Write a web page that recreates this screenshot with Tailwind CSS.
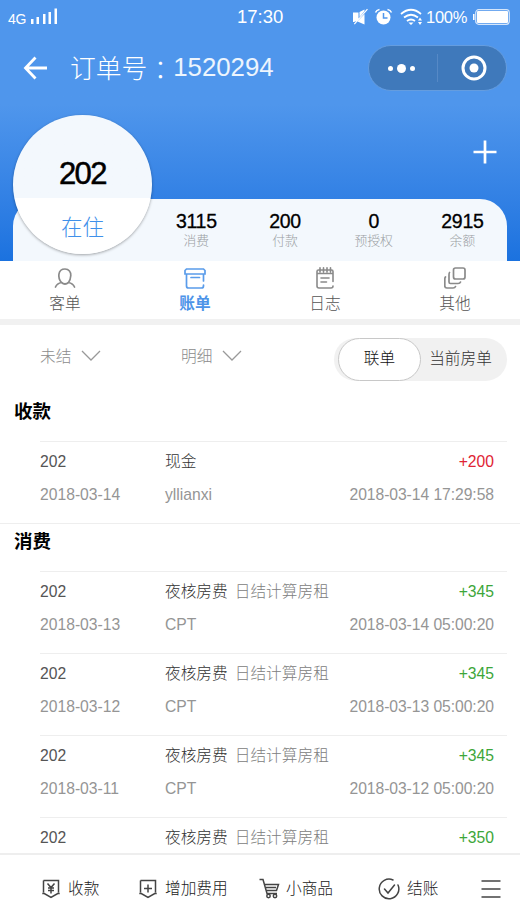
<!DOCTYPE html>
<html lang="zh-CN">
<head>
<meta charset="utf-8">
<title>订单号：1520294</title>
<script src="https://cdn.jsdelivr.net/npm/@tailwindcss/browser@4"></script>
</head>
<body class="bg-white">
<div class="relative flex h-[924px] w-[520px] flex-col overflow-hidden bg-white font-['Liberation_Sans','Noto_Sans_CJK_SC',sans-serif] font-light">

  <header class="relative flex h-[261px] shrink-0 flex-col bg-linear-to-b from-[#4f96ec] from-40% to-[#1b72df] text-white">
    <!-- status bar -->
    <div class="relative flex h-[34px] items-center pl-[8px] pr-[10px]">
      <span class="mt-[3px] text-[14px] leading-[20px] tracking-[-0.3px]">4G</span>
      <svg class="ml-[4px] -mt-[2px]" width="28" height="18" viewBox="0 0 28 18" fill="#fff"><path d="M1 12h2.500v5H1zM6.500 10H9v7H6.500zM13 7h2.500v10H13zM18.500 5H21v12h-2.500zM24.500 1.500H27V17h-2.500z"/></svg>
      <span class="absolute left-[237px] top-[7px] text-[18.500px] leading-[20px]">17:30</span>
      <div class="ml-auto flex items-center">
        <svg width="17" height="18" viewBox="0 0 17 18" fill="#fff"><path d="M1 4.500h5.500V12L2 14H1zM7.500 4L12.500 1.500V3L7.500 9zM5.500 13.500L12.500 6v10.500zM15 .8l.9.8L2.800 16.500l-.9-.8z"/></svg>
        <svg class="ml-[5px]" width="19" height="18" viewBox="0 0 19 18"><circle cx="9.500" cy="9.500" r="7" fill="#fff"/><path d="M9.500 5v5h4" fill="none" stroke="#4f96ec" stroke-width="1.500"/><path d="M1.500 4.500q1-2.500 4-3M17.500 4.500q-1-2.500-4-3" fill="none" stroke="#fff" stroke-width="1.500"/></svg>
        <svg class="ml-[7px]" width="23" height="18" viewBox="0 0 23 18" fill="none" stroke="#fff" stroke-width="1.800"><path d="M1 6q10-8.500 20 0M4 9.500q7-5.500 14 0M7 13q4-3 8 0"/><path d="M8.500 14.500h5L11 17zM18 12.500l2-3 2 3zM18 14l2 3 2-3z" fill="#fff" stroke="none"/></svg>
        <span class="ml-[3px] w-[43px] whitespace-nowrap text-[16.500px] leading-[20px] tracking-[-0.300px]">100%</span>
        <svg class="ml-[3px]" width="38" height="16" viewBox="0 0 38 16"><rect x="3.700" y=".7" width="33.600" height="14.600" rx="3" fill="none" stroke="#d5e6fb" stroke-width="1.200"/><path d="M2.500 5v6H1V5z" fill="#fff"/><rect x="5" y="2" width="31" height="12" rx="1" fill="#fff"/></svg>
      </div>
    </div>
    <!-- title bar -->
    <div class="flex h-[68px] items-center pl-[23px] pr-[13px]">
      <svg width="25" height="24" viewBox="0 0 25 24" fill="none" stroke="#fff" stroke-width="2.800"><path d="M12.500 1.500L2.500 12l10 10.500M2.500 12H24"/></svg>
      <h1 class="ml-[22px] flex text-[25.800px] leading-[34px] font-light"><span class="font-['Noto_Sans_CJK_SC']">订单号</span><span lang="zh-TW" class="pt-[2px] font-['Noto_Sans_CJK_TC']">：</span><span class="text-white/90">1520294</span></h1>
      <div class="ml-auto flex h-[46px] w-[139px] items-center rounded-full border border-[#659ddf] bg-[#3f79bb]">
        <div class="flex w-[65px] items-center justify-center gap-[4px]"><i class="size-[5px] rounded-full bg-white"></i><i class="size-[9px] rounded-full bg-white"></i><i class="size-[5px] rounded-full bg-white"></i></div>
        <div class="ml-[3px] h-[28px] w-px bg-[#5689c6]"></div>
        <div class="flex flex-1 justify-center pl-[3px]"><svg width="26" height="26" viewBox="0 0 26 26"><circle cx="13" cy="13" r="11" fill="none" stroke="#fff" stroke-width="3"/><circle cx="13" cy="13" r="4.500" fill="#fff"/></svg></div>
      </div>
    </div>
    <div class="flex h-[97px] items-center justify-end pr-[23px]"><svg class="mt-[3px]" width="24" height="24" viewBox="0 0 24 24" stroke="#fff" stroke-width="2.700"><path d="M12 .5v23M.5 12h23"/></svg></div>
    <!-- totals -->
    <div class="mx-[13px] flex h-[62px] rounded-t-[27px] bg-[#f3f8fd] pl-[139px] pt-[12px] text-center text-[#9a9ea3]">
      <div class="w-[88.700px]"><b class="block text-[19.500px] font-normal leading-[21px] tracking-[-0.300px] text-black [-webkit-text-stroke:0.300px_black]">3115</b><span class="mt-px block text-[12.800px] leading-[15px]">消费</span></div>
      <div class="w-[88.700px]"><b class="block text-[19.500px] font-normal leading-[21px] tracking-[-0.300px] text-black [-webkit-text-stroke:0.300px_black]">200</b><span class="mt-px block text-[12.800px] leading-[15px]">付款</span></div>
      <div class="w-[88.700px]"><b class="block text-[19.500px] font-normal leading-[21px] tracking-[-0.300px] text-black [-webkit-text-stroke:0.300px_black]">0</b><span class="mt-px block text-[12.800px] leading-[15px]">预授权</span></div>
      <div class="w-[88.700px]"><b class="block text-[19.500px] font-normal leading-[21px] tracking-[-0.300px] text-black [-webkit-text-stroke:0.300px_black]">2915</b><span class="mt-px block text-[12.800px] leading-[15px]">余额</span></div>
    </div>
    <!-- room badge -->
    <div class="absolute left-[13px] top-[115px] flex size-[139px] flex-col items-center rounded-full bg-linear-to-b from-[#f3f8fd] from-60% to-white to-60% pt-[41px] shadow-[0_1px_3px_rgba(0,0,0,0.35)]">
      <div class="text-[31px] leading-[36px] tracking-[-1.500px] text-black [-webkit-text-stroke:0.500px_black]">202</div>
      <div class="mt-[20px] text-[21.500px] leading-[32px] text-[#3f90ea]">在住</div>
    </div>
  </header>

  <!-- tabs -->
  <nav class="grid h-[58px] shrink-0 grid-cols-4 text-center text-[15.700px] leading-[20px] text-[#555]">
    <div class="flex flex-col items-center pt-[6px]">
      <svg width="22" height="22" viewBox="0 0 22 22" fill="none" stroke="#8a8a8a" stroke-width="1.700" stroke-linecap="round"><path d="M14.500 15.500Q11 18.500 7.500 15.500C3.500 11 3.500 2 11 2c4 0 6 3 5.800 6.500Q16.500 13 14.500 15.500M7.500 15.500Q3 16.500 1.500 20M14.500 15.500Q19 16.500 20.500 20"/></svg>
      <span class="mt-[5px]">客单</span></div>
    <div class="flex flex-col items-center pt-[6px] font-bold text-[#4d94e8]">
      <svg width="22" height="22" viewBox="0 0 22 22" fill="none" stroke="#5a9cea" stroke-width="1.700" stroke-linecap="round"><path d="M2.500 2h17l1.500 1.500V7H1V3.500zM2.500 7v12q0 2 2 2h13q2 0 2-2v-1M19.500 14V7M7 10.500h8.500"/></svg>
      <span class="mt-[5px]">账单</span></div>
    <div class="flex flex-col items-center pt-[6px]">
      <svg width="22" height="22" viewBox="0 0 22 22" fill="none" stroke="#8a8a8a" stroke-width="1.600" stroke-linecap="round"><path d="M19 14.500V4.500q0-1.500-1.500-1.500h-13Q3 3 3 4.500V19q0 2 2 2h12q2 0 2-2M3.500 6.500h15M6 .8V5M9.500.8V5M13 .8V5M16.500.8V5M7 11h8M7 15h5.500"/></svg>
      <span class="mt-[5px]">日志</span></div>
    <div class="flex flex-col items-center pt-[6px]">
      <svg width="22" height="22" viewBox="0 0 22 22" fill="none" stroke="#8a8a8a" stroke-width="1.700" stroke-linecap="round"><rect x="9.500" y="1" width="11.500" height="11" rx="2"/><path d="M5.500 5.500Q5 6 5 8v7q0 1.500 1.500 1.500H14q2 0 2.500-1.500M1.500 10Q.8 10.500.8 12.500V19q0 2 2 2H9q2 0 2.500-1.500"/></svg>
      <span class="mt-[5px]">其他</span></div>
  </nav>
  <div class="h-[6px] shrink-0 bg-[#f1f1f1]"></div>

  <!-- filters -->
  <div class="flex h-[66px] shrink-0 items-center pl-[40px] pr-[13px] pt-[3px] text-[15.700px] leading-[22px] text-[#8c8c8c]">
    <div class="flex w-[141px] items-center gap-[10px] pb-[5px]">未结<svg class="-mt-[2px]" width="20" height="12" viewBox="0 0 20 12" fill="none" stroke="#999" stroke-width="1.300"><path d="M1 1l9 9L19 1"/></svg></div>
    <div class="flex items-center gap-[10px] pb-[5px]">明细<svg class="-mt-[2px]" width="20" height="12" viewBox="0 0 20 12" fill="none" stroke="#999" stroke-width="1.300"><path d="M1 1l9 9L19 1"/></svg></div>
    <div class="ml-auto flex h-[43px] w-[173px] items-center rounded-full bg-[#f1f1f1] pl-[4px]">
      <div class="flex h-[43px] w-[83px] items-center justify-center rounded-full border-[1.5px] border-[#c8c8c8] bg-white pb-[2px] text-[#111]">联单</div>
      <div class="flex-1 pb-[2px] pr-[7px] text-center text-[#333]">当前房单</div>
    </div>
  </div>

  <!-- ledger -->
  <main class="flex h-[462px] shrink-0 flex-col overflow-hidden text-[15.700px] leading-[20px] text-[#959595]">
    <h2 class="h-[49.500px] shrink-0 pl-[14px] pt-[10px] text-[18.500px] font-bold leading-[22px] text-black">收款</h2>
    <section class="ml-[40px] mr-[13px] grid h-[82px] shrink-0 grid-cols-[125px_1fr_auto] grid-rows-[20px_20px] content-start gap-y-[13px] border-t border-[#eee] pr-[13px] pt-[10px]">
      <span class="text-[#555]">202</span><span class="text-[#333]">现金</span><span class="text-right text-[#e02434]">+200</span>
      <span>2018-03-14</span><span>yllianxi</span><span class="text-right tracking-[-0.060px]">2018-03-14 17:29:58</span>
    </section>
    <h2 class="h-[48px] shrink-0 border-t border-[#eee] pl-[14px] pt-[7px] text-[18.500px] font-bold leading-[22px] text-black">消费</h2>
    <section class="ml-[40px] mr-[13px] grid h-[82.300px] shrink-0 grid-cols-[125px_1fr_auto] grid-rows-[20px_20px] content-start gap-y-[13px] border-t border-[#eee] pr-[13px] pt-[10px]">
      <span class="text-[#555]">202</span><span><span class="mr-[7px] text-[#333]">夜核房费</span><span class="text-[#808080]">日结计算房租</span></span><span class="text-right text-[#3da639]">+345</span>
      <span>2018-03-13</span><span>CPT</span><span class="text-right tracking-[-0.060px]">2018-03-14 05:00:20</span>
    </section>
    <section class="ml-[40px] mr-[13px] grid h-[82.300px] shrink-0 grid-cols-[125px_1fr_auto] grid-rows-[20px_20px] content-start gap-y-[13px] border-t border-[#eee] pr-[13px] pt-[10px]">
      <span class="text-[#555]">202</span><span><span class="mr-[7px] text-[#333]">夜核房费</span><span class="text-[#808080]">日结计算房租</span></span><span class="text-right text-[#3da639]">+345</span>
      <span>2018-03-12</span><span>CPT</span><span class="text-right tracking-[-0.060px]">2018-03-13 05:00:20</span>
    </section>
    <section class="ml-[40px] mr-[13px] grid h-[82.300px] shrink-0 grid-cols-[125px_1fr_auto] grid-rows-[20px_20px] content-start gap-y-[13px] border-t border-[#eee] pr-[13px] pt-[10px]">
      <span class="text-[#555]">202</span><span><span class="mr-[7px] text-[#333]">夜核房费</span><span class="text-[#808080]">日结计算房租</span></span><span class="text-right text-[#3da639]">+345</span>
      <span>2018-03-11</span><span>CPT</span><span class="text-right tracking-[-0.060px]">2018-03-12 05:00:20</span>
    </section>
    <section class="ml-[40px] mr-[13px] flex h-[36px] shrink-0 border-t border-[#eee] pr-[13px] pt-[10px]">
      <span class="w-[125px] text-[#555]">202</span><span><span class="mr-[7px] text-[#333]">夜核房费</span><span class="text-[#808080]">日结计算房租</span></span><span class="ml-auto text-[#3da639]">+350</span>
    </section>
  </main>

  <!-- actions -->
  <footer class="flex h-[71px] shrink-0 items-center border-t-2 border-[#eee] bg-white pb-[2px] pl-[42px] text-[15.700px] leading-[22px] text-[#222]">
    <div class="flex w-[96px] items-center gap-[8px]"><svg width="18" height="20" viewBox="0 0 18 20" fill="none" stroke="#444" stroke-width="1.500"><path d="M1.500 1.500h15v12M1.500 1.500v12M.3 14.500h2L9 18.500l6.700-4h2M5.500 4.500L9 8.500l3.500-4M9 8.500v6M6 9h6M6 11.500h6"/></svg>收款</div>
    <div class="flex w-[121px] items-center gap-[8px]"><svg class="ml-[1px]" width="18" height="20" viewBox="0 0 18 20" fill="none" stroke="#444" stroke-width="1.500"><path d="M1.500 1.500h15v12M1.500 1.500v12M.3 14.500h2L9 18.500l6.700-4h2M5 9.500h8M9 5.500v8"/></svg>增加费用</div>
    <div class="flex w-[119px] items-center gap-[6px]"><svg width="21" height="21" viewBox="0 0 21 21" fill="none" stroke="#444" stroke-width="1.500"><path d="M.5 1.500H4l4 14h10M5 6.500h14.500l-2 6H7M7 9.500h10"/><circle cx="9.500" cy="18" r="1.700"/><circle cx="16" cy="18" r="1.700"/></svg>小商品</div>
    <div class="flex w-[103px] items-center gap-[7px]"><svg width="22" height="22" viewBox="0 0 22 22" fill="none" stroke="#444" stroke-width="1.500" stroke-linecap="round"><path d="M15 2A9.800 9.800 0 1 0 20 7M6.500 11l3.500 4 6.500-8"/></svg>结账</div>
    <svg width="20" height="18" viewBox="0 0 20 18" stroke="#444" stroke-width="1.500"><path d="M.5 1h19M.5 9h19M.5 17h19"/></svg>
  </footer>
</div>
</body>
</html>
